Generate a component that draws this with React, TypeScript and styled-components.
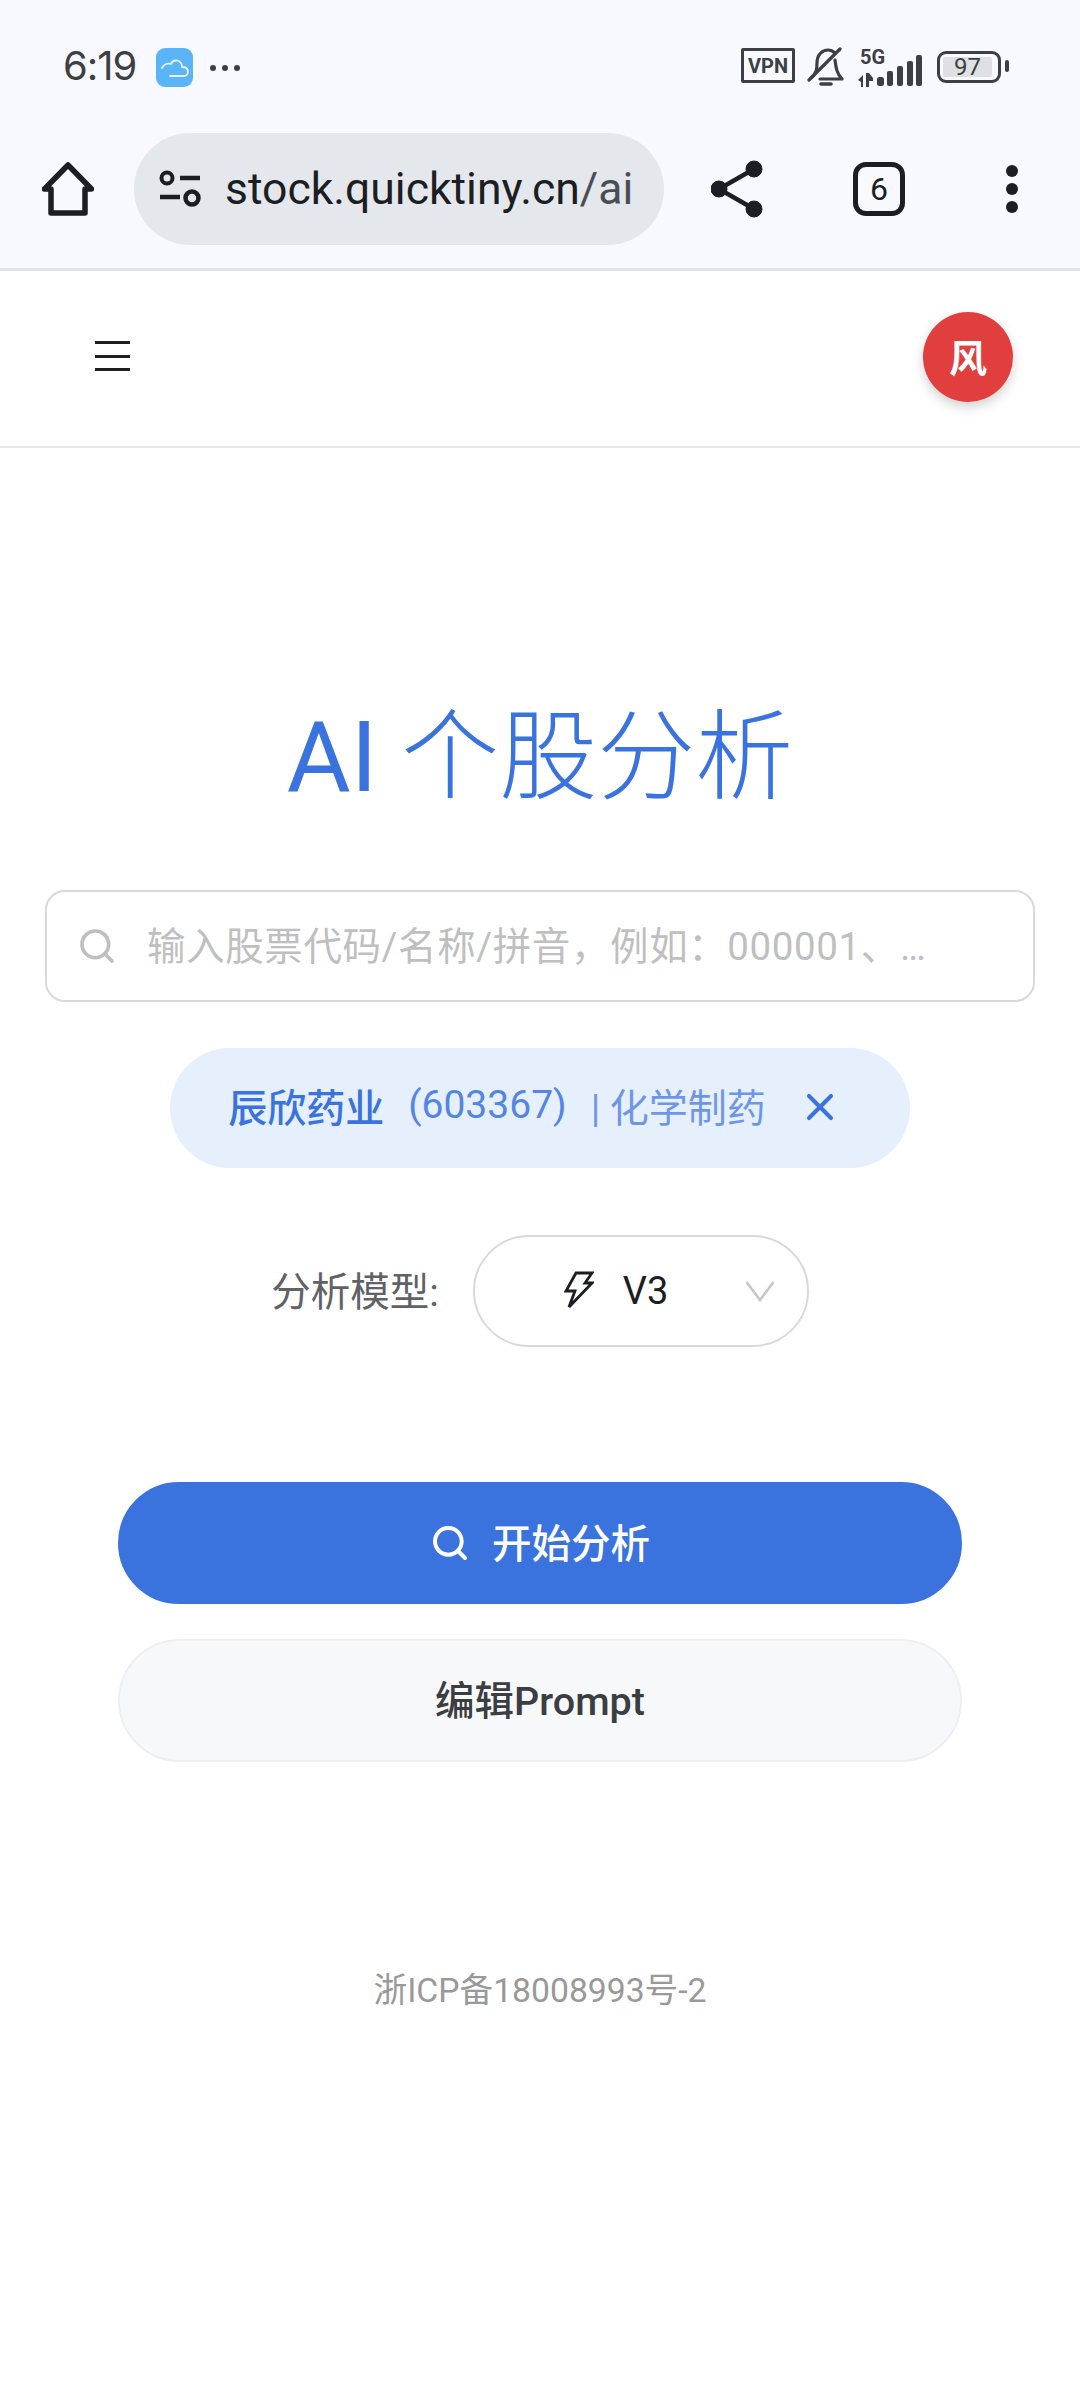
import styled, { createGlobalStyle } from "styled-components";
import { Search, X } from "lucide-react";

const FONT = `Roboto, "Noto Sans CJK SC", sans-serif`;

const GlobalStyle = createGlobalStyle`
  html, body {
    margin: 0;
    padding: 0;
    background: #fff;
    font-family: ${FONT};
  }
`;

const HomeIcon = () => (
  <svg width="52" height="54" viewBox="0 0 52 54" fill="none" stroke="#1b1e22" strokeWidth="5.500" strokeLinejoin="round">
    <path d="M2.500 27 26 3 49.500 27H43V51H9V27Z" />
  </svg>
);

const TuneIcon = () => (
  <svg width="42" height="38" viewBox="0 0 42 38" fill="none" stroke="#1b1e22">
    <circle cx="8" cy="8" r="5.500" strokeWidth="4" />
    <path d="M21 8H41M1 27H21" strokeWidth="4.500" />
    <circle cx="33" cy="28" r="6.500" strokeWidth="4.500" />
  </svg>
);

const ShareIcon = () => (
  <svg width="52" height="58" viewBox="0 0 52 58" fill="#1b1e22" stroke="#1b1e22">
    <path d="M43 9 8 29 43 49" fill="none" strokeWidth="4.500" />
    <circle cx="43" cy="9" r="8" />
    <circle cx="8" cy="29" r="8" />
    <circle cx="43" cy="49" r="8" />
  </svg>
);

const BellOffIcon = () => (
  <svg width="38" height="40" viewBox="0 0 38 40" fill="none" stroke="#3c3f43" strokeWidth="3.200" strokeLinecap="round" strokeLinejoin="round">
    <path d="M4 31C9 27 10 23 10 16 10 8 15 3 21 3 24 3 26 4 28 6" />
    <path d="M28 13C29 21 30 27 35 32H13" />
    <path d="M2 33 33 2" />
    <path d="M14 37H24" strokeWidth="3.600" />
  </svg>
);

const SignalIcon = () => (
  <svg width="64" height="32" viewBox="0 0 64 32" fill="#3c3f43">
    <rect x="19" y="22" width="7" height="9" rx="2.500" />
    <rect x="29" y="16" width="6" height="15" rx="2" />
    <rect x="39" y="11" width="6" height="20" rx="2" />
    <rect x="49" y="6" width="6" height="25" rx="2" />
    <rect x="58" y="0" width="6" height="31" rx="2" />
    <path d="M0 25 5 20V32H3V27ZM8 18H11L15 23V26H11V32H8Z" />
  </svg>
);

const CloudIcon = () => (
  <svg width="28" height="20" viewBox="0 0 28 20" fill="none" stroke="#e6f4ff" strokeWidth="1.800" strokeLinecap="round" strokeLinejoin="round">
    <path d="M1 10C3 6 7 5 10 6 11 2 17 1 20 5 21 7 21 8 21 9 25 9 27 11 27 14 27 17 24 18 22 18H9" />
  </svg>
);

const BoltIcon = () => (
  <svg width="30" height="40" viewBox="0 0 30 40" fill="none" stroke="#1c1e21" strokeWidth="2.800" strokeLinejoin="miter">
    <path d="M12 2H28L21 12H28L5 36 11 20H2Z" />
  </svg>
);

const ChevronIcon = () => (
  <svg width="30" height="22" viewBox="0 0 30 22" fill="none" stroke="#c4c6c9" strokeWidth="2.600">
    <path d="M1.500 2 15 20 28.500 2" />
  </svg>
);

const Page = styled.div`
  width: 1080px;
  min-height: 2400px;
  background: #fff;
  overflow: hidden;
`;

const Chrome = styled.header`
  height: 268px;
  background: #f7f9ff;
  border-bottom: 3px solid #e3e4ea;
`;

const StatusBar = styled.div`
  height: 133px;
  box-sizing: border-box;
  padding: 47px 71px 0 63px;
  display: flex;
  align-items: flex-start;
  color: #3c3f43;
`;

const Time = styled.span`
  font-size: 40px;
  line-height: 38px;
  width: 93px;
  font-family: Inter, ${FONT};
  letter-spacing: -1px;
`;

const AppBadge = styled.span`
  width: 37px;
  height: 39px;
  margin-top: 1px;
  border-radius: 9px;
  background: #5ab4f8;
  display: flex;
  align-items: center;
  justify-content: center;
`;

const MoreDots = styled.span`
  margin: 18px 0 0 17px;
  display: flex;
  gap: 6px;
  i {
    width: 6px;
    height: 6px;
    border-radius: 50%;
    background: #3c3f43;
  }
`;

const StatusRight = styled.div`
  margin-left: auto;
  display: flex;
  align-items: flex-start;
`;

const VpnBox = styled.span`
  width: 54px;
  height: 35px;
  margin-top: 1px;
  box-sizing: border-box;
  border: 3px solid #3c3f43;
  border-radius: 2px;
  display: flex;
  align-items: center;
  justify-content: center;
  font-size: 20px;
  font-weight: 700;
  margin-right: 12px;
`;

const Cellular = styled.span`
  position: relative;
  width: 64px;
  height: 40px;
  margin-left: 13px;
  display: flex;
  align-items: flex-end;
`;

const FiveG = styled.span`
  position: absolute;
  top: 0;
  left: 2px;
  font-size: 20px;
  line-height: 20px;
  font-weight: 700;
`;

const Battery = styled.span`
  width: 64px;
  height: 32px;
  margin: 4px 8px 0 15px;
  box-sizing: border-box;
  border: 3px solid #3c3f43;
  border-radius: 9px;
  padding: 3px;
  position: relative;
  display: flex;
  &::after {
    content: "";
    position: absolute;
    right: -11px;
    top: 6px;
    width: 4px;
    height: 12px;
    border-radius: 2px;
    background: #3c3f43;
  }
`;

const BatteryLevel = styled.span`
  flex: 1;
  margin-right: 3px;
  background: #dfe0e4;
  border-radius: 2px;
  font-size: 24px;
  line-height: 20px;
  text-align: center;
`;

const Toolbar = styled.div`
  height: 135px;
  padding-left: 42px;
  display: flex;
  align-items: flex-start;
`;

const ToolSlot = styled.span<{ $gap: number; $top: number }>`
  margin-left: ${(p) => p.$gap}px;
  margin-top: ${(p) => p.$top}px;
  display: flex;
`;

const UrlPill = styled.div`
  width: 530px;
  height: 112px;
  margin-left: 40px;
  box-sizing: border-box;
  padding-left: 25px;
  border-radius: 56px;
  background: #e4e7ec;
  display: flex;
  align-items: center;
  gap: 24px;
`;

const UrlText = styled.span`
  font-size: 44.500px;
  color: #1b1e22;
  white-space: nowrap;
  span {
    color: #4a4e54;
  }
`;

const TabBox = styled.span`
  width: 52px;
  height: 54px;
  box-sizing: border-box;
  border: 5px solid #1b1e22;
  border-radius: 13px;
  display: flex;
  align-items: center;
  justify-content: center;
  font-size: 32px;
  color: #1b1e22;
`;

const VerticalDots = styled.span`
  display: flex;
  flex-direction: column;
  gap: 6px;
  i {
    width: 12px;
    height: 12px;
    border-radius: 50%;
    background: #1b1e22;
  }
`;

const NavBar = styled.nav`
  height: 177px;
  box-sizing: border-box;
  border-bottom: 2px solid #e8e8ec;
  padding: 41px 67px 0 95px;
  display: flex;
  justify-content: space-between;
`;

const Hamburger = styled.span`
  width: 35px;
  margin-top: 29px;
  height: 30px;
  display: flex;
  flex-direction: column;
  justify-content: space-between;
  i {
    height: 3px;
    background: #1f1f1f;
  }
`;

const Avatar = styled.span`
  width: 90px;
  height: 90px;
  box-sizing: border-box;
  padding-bottom: 3px;
  border-radius: 50%;
  background: #e03f3d;
  color: #fff;
  font-size: 38px;
  font-weight: 700;
  display: flex;
  align-items: center;
  justify-content: center;
  box-shadow: 0 5px 12px rgba(0, 0, 0, 0.18);
`;

const Main = styled.main`
  padding: 250px 45px 0;
  display: flex;
  flex-direction: column;
  align-items: center;
`;

const Title = styled.h1`
  margin: 0;
  font-size: 98px;
  line-height: 120px;
  font-weight: 300;
  color: #3b73de;
  span {
    font-weight: 400;
  }
`;

const SearchBox = styled.div`
  width: 990px;
  height: 112px;
  margin-top: 72px;
  box-sizing: border-box;
  border: 2px solid #d9d9d9;
  border-radius: 20px;
  padding: 0 30px;
  display: flex;
  align-items: center;
  gap: 30px;
  color: #bfbfbf;
`;

const Placeholder = styled.span`
  font-size: 38.500px;
  letter-spacing: 0.600px;
  padding-bottom: 6px;
  white-space: nowrap;
  overflow: hidden;
  text-overflow: ellipsis;
`;

const StockChip = styled.div`
  height: 120px;
  margin-top: 46px;
  padding: 0 68px 6px 58px;
  box-sizing: border-box;
  border-radius: 60px;
  background: #e6effc;
  display: flex;
  align-items: center;
  font-size: 39px;
  color: #3b73de;
`;

const StockName = styled.span`
  font-weight: 500;
`;

const StockCode = styled.span`
  margin-left: 24px;
  opacity: 0.85;
`;

const StockSector = styled.span`
  margin-left: 24px;
  opacity: 0.7;
`;

const ChipClose = styled.span`
  margin: 3px 0 0 32px;
  display: flex;
`;

const ModelRow = styled.div`
  margin-top: 67px;
  display: flex;
  align-items: center;
  gap: 34px;
`;

const ModelLabel = styled.span`
  font-size: 39.500px;
  padding-bottom: 6px;
  color: #606266;
`;

const ModelSelect = styled.div`
  width: 336px;
  height: 112px;
  box-sizing: border-box;
  border: 2px solid #d9d9d9;
  border-radius: 56px;
  padding: 0 32px 0 89px;
  display: flex;
  align-items: center;
  color: #1c1e21;
  font-size: 38px;
`;

const ModelName = styled.span`
  margin-left: 29px;
`;

const ModelArrow = styled.span`
  margin-left: auto;
  display: flex;
`;

const ActionButton = styled.button<{ $primary?: boolean }>`
  width: 844px;
  height: ${(p) => (p.$primary ? 122 : 123)}px;
  margin-top: ${(p) => (p.$primary ? 135 : 35)}px;
  border-radius: 62px;
  border: 2px solid ${(p) => (p.$primary ? "#3b73de" : "#eeeff1")};
  background: ${(p) => (p.$primary ? "#3b73de" : "#f7f8fa")};
  color: ${(p) => (p.$primary ? "#fff" : "#3a3d41")};
  font-family: ${FONT};
  font-size: 39.500px;
  font-weight: 500;
  display: flex;
  align-items: center;
  justify-content: center;
  gap: 22px;
`;

const ButtonLabel = styled.span`
  padding-bottom: 6px;
`;

const Footer = styled.footer`
  margin-top: 205px;
  font-size: 33.700px;
  line-height: 48px;
  color: #999;
`;

export default function App() {
  return (
    <>
      <GlobalStyle />
      <Page>
        <Chrome>
          <StatusBar>
            <Time>6:19</Time>
            <AppBadge>
              <CloudIcon />
            </AppBadge>
            <MoreDots>
              <i />
              <i />
              <i />
            </MoreDots>
            <StatusRight>
              <VpnBox>VPN</VpnBox>
              <BellOffIcon />
              <Cellular>
                <FiveG>5G</FiveG>
                <SignalIcon />
              </Cellular>
              <Battery>
                <BatteryLevel>97</BatteryLevel>
              </Battery>
            </StatusRight>
          </StatusBar>
          <Toolbar>
            <ToolSlot $gap={0} $top={29}>
              <HomeIcon />
            </ToolSlot>
            <UrlPill>
              <TuneIcon />
              <UrlText>
                stock.quicktiny.cn<span>/ai</span>
              </UrlText>
            </UrlPill>
            <ToolSlot $gap={47} $top={27}>
              <ShareIcon />
            </ToolSlot>
            <ToolSlot $gap={90} $top={29}>
              <TabBox>6</TabBox>
            </ToolSlot>
            <ToolSlot $gap={101} $top={32}>
              <VerticalDots>
                <i />
                <i />
                <i />
              </VerticalDots>
            </ToolSlot>
          </Toolbar>
        </Chrome>
        <NavBar>
          <Hamburger>
            <i />
            <i />
            <i />
          </Hamburger>
          <Avatar>风</Avatar>
        </NavBar>
        <Main>
          <Title>
            <span>AI</span> 个股分析
          </Title>
          <SearchBox>
            <Search size={40} strokeWidth={2.2} />
            <Placeholder>输入股票代码/名称/拼音，例如：000001、…</Placeholder>
          </SearchBox>
          <StockChip>
            <StockName>辰欣药业</StockName>
            <StockCode>(603367)</StockCode>
            <StockSector>| 化学制药</StockSector>
            <ChipClose>
              <X size={44} strokeWidth={2.2} />
            </ChipClose>
          </StockChip>
          <ModelRow>
            <ModelLabel>分析模型:</ModelLabel>
            <ModelSelect>
              <BoltIcon />
              <ModelName>V3</ModelName>
              <ModelArrow>
                <ChevronIcon />
              </ModelArrow>
            </ModelSelect>
          </ModelRow>
          <ActionButton $primary>
            <Search size={40} strokeWidth={2.4} />
            <ButtonLabel>开始分析</ButtonLabel>
          </ActionButton>
          <ActionButton>
            <ButtonLabel>编辑Prompt</ButtonLabel>
          </ActionButton>
          <Footer>浙ICP备18008993号-2</Footer>
        </Main>
      </Page>
    </>
  );
}
